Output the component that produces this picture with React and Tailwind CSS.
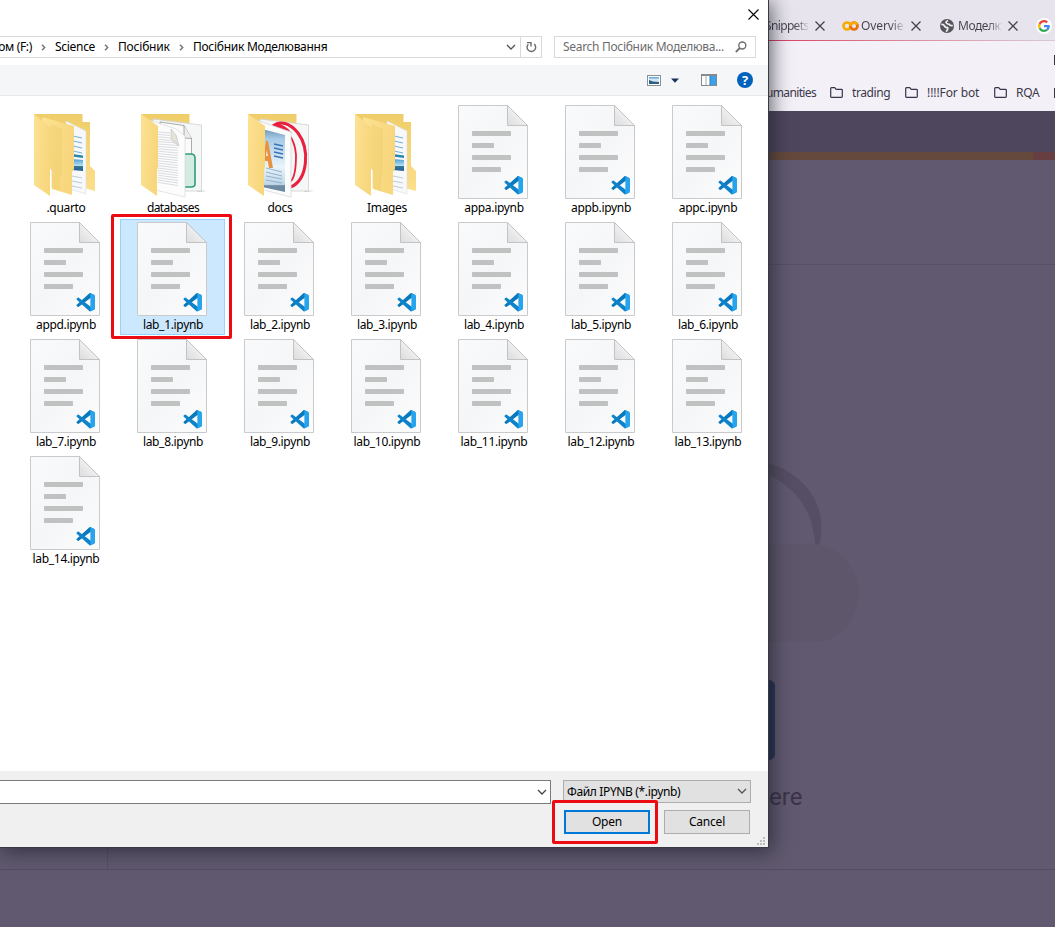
import React from "react";

const files = [
  [".quarto", "pages"], ["databases", "sheets"], ["docs", "docs"], ["Images", "pages"],
  ["appa.ipynb"], ["appb.ipynb"], ["appc.ipynb"], ["appd.ipynb"],
  ["lab_1.ipynb"], ["lab_2.ipynb"], ["lab_3.ipynb"], ["lab_4.ipynb"], ["lab_5.ipynb"], ["lab_6.ipynb"],
  ["lab_7.ipynb"], ["lab_8.ipynb"], ["lab_9.ipynb"], ["lab_10.ipynb"], ["lab_11.ipynb"], ["lab_12.ipynb"],
  ["lab_13.ipynb"], ["lab_14.ipynb"],
];

function Defs() {
  return (
    <svg width="0" height="0" className="absolute">
      <defs>
        <linearGradient id="paper" x1="0" y1="0" x2="1" y2="1">
          <stop offset="0" stopColor="#f9fafb" /><stop offset="0.5" stopColor="#f5f6f8" /><stop offset="1" stopColor="#fcfcfc" />
        </linearGradient>
        <linearGradient id="fold" x1="0" y1="1" x2="0.7" y2="0.3">
          <stop offset="0" stopColor="#dcdcdc" /><stop offset="1" stopColor="#f6f6f6" />
        </linearGradient>
        <linearGradient id="flap" x1="0" y1="0" x2="1" y2="0.3">
          <stop offset="0" stopColor="#fde293" /><stop offset="1" stopColor="#f7d67c" />
        </linearGradient>
        <linearGradient id="back" x1="0" y1="0" x2="0" y2="1">
          <stop offset="0" stopColor="#efcd69" /><stop offset="1" stopColor="#fbdf8c" />
        </linearGradient>
        <linearGradient id="sky" x1="0" y1="0" x2="0" y2="1">
          <stop offset="0" stopColor="#4a9fd8" /><stop offset="0.55" stopColor="#b8e0ef" /><stop offset="0.6" stopColor="#357b91" /><stop offset="1" stopColor="#245f9c" />
        </linearGradient>
        <linearGradient id="doc" x1="0" y1="0" x2="0" y2="1">
          <stop offset="0" stopColor="#6d97b5" /><stop offset="0.15" stopColor="#a5c9e5" /><stop offset="0.6" stopColor="#eaf4fb" /><stop offset="0.88" stopColor="#bfd7e8" /><stop offset="0.9" stopColor="#6f8ba3" />
        </linearGradient>
      </defs>
    </svg>
  );
}

function Notebook() {
  return (
    <svg width="70" height="94" viewBox="0 0 70 94">
      <path d="M.5.5H49.5L69.5 20.5V93.5H.5Z" fill="url(#paper)" stroke="#c9cacc" />
      <path d="M49.5.5V20.5H69.5Z" fill="url(#fold)" stroke="#c2c3c4" />
      <g fill="#c0c1c1">
        <rect x="14" y="26" width="39" height="5" rx=".7" /><rect x="14" y="38" width="22" height="5" rx=".7" />
        <rect x="14" y="50" width="39" height="5" rx=".7" /><rect x="14" y="62" width="29" height="5" rx=".7" />
      </g>
      <g transform="translate(46.5 71) scale(.185)">
        <path d="M96.5 10.8 75.9.9c-2.4-1.1-5.2-.7-7.1 1.2L1.3 63.6c-1.8 1.7-1.8 4.5 0 6.1l5.5 5c1.5 1.4 3.7 1.5 5.3.2L93.4 13.4c2.7-2.1 6.6-.1 6.6 3.3v-.3c0-2.4-1.4-4.6-3.5-5.6Z" fill="#0879bd" />
        <path d="m96.5 89.2-20.6 9.9c-2.4 1.1-5.2.7-7.1-1.2L1.3 36.4c-1.8-1.7-1.8-4.5 0-6.1l5.5-5c1.5-1.4 3.7-1.5 5.3-.2l81.3 61.5c2.7 2.1 6.6.1 6.6-3.3v.3c0 2.4-1.4 4.6-3.5 5.6Z" fill="#0d83cb" />
        <path d="M75.9 99.1c-2.4 1.2-5.2.7-7.1-1.2 2.3 2.3 6.2.7 6.2-2.6V4.7c0-3.3-3.9-4.9-6.2-2.6C70.7.2 73.5-.2 75.9.9l20.6 9.9c2.1 1 3.5 3.2 3.5 5.6v67.2c0 2.4-1.4 4.6-3.5 5.6Z" fill="#27a4ee" />
      </g>
    </svg>
  );
}

function Folder({ kind }) {
  return (
    <svg width="70" height="94" viewBox="0 0 70 94">
      {kind === "pages" ? (
        <>
          <path d="M4 9H52.5V17H60V61L65 66V86L54 83H40L12 50Z" fill="url(#back)" />
          <path d="M36 16 56 26V89L36 83Z" fill="#f7f8f9" stroke="#dcddde" strokeWidth=".6" />
          <g stroke="#77b2da" strokeWidth="1.1"><path d="M43 31 52 33M43 36 52 38M43 41 52 43M43 46 52 48" /></g>
          <path d="M42 49 53 50.500V53L42 51.500Z" fill="#2787ad" />
          <path d="M42 54 53 55V66L42 65Z" fill="url(#sky)" />
          <g stroke="#bdcdd8" strokeWidth="1"><path d="M42 71 52 73M42 76 52 78M42 81 52 83" /></g>
          <path d="M12 12 44 21V64L42 67V90L22 84V66L17 60Z" fill="url(#flap)" />
          <path d="M21 19 32 24V68L30 72V86L21 83Z" fill="#e8bf55" opacity=".24" />
        </>
      ) : (
        <>
          <path d="M4 9H52.500V30L20 55Z" fill="url(#back)" />
          <path d="M59 85 71 86 61 87Z" fill="#c9c9c9" />
          <path d="M16 14 64.500 20V86H42L16 76Z" fill="#f5f6f6" stroke="#cfd0d0" strokeWidth=".8" />
        </>
      )}
      {kind === "sheets" && (
        <>
          <path d="M23 17 47 20.500 54.500 33.500V76L30 84Z" fill="#fbfbfb" stroke="#777" strokeWidth=".6" />
          <path d="M47 20.500V33L54.500 33.500" fill="#ededed" stroke="#777" strokeWidth=".6" />
          <path d="M46 49H54Q58 49 58 53V79Q58 82 54 82H46Z" fill="#d3ebe0" stroke="#2e9f78" strokeWidth="1.600" />
          <path d="M12 15 39 24 48 31V92L18 85Z" fill="#fcfcfc" stroke="#d3d3d3" strokeWidth=".6" />
          <path d="M34 24 39 30 42 41 34 35Z" fill="#e5e2d9" stroke="#b5b5b5" strokeWidth=".5" />
          <g stroke="#d0d3d5" strokeWidth=".8">
            {Array.from({ length: 22 }, (_, i) => <path key={i} d={`M21 ${27 + i * 2.4} L${i < 4 ? 33 : 41} ${28 + i * 2.5}`} />)}
          </g>
        </>
      )}
      {kind === "docs" && (
        <>
          <g fill="none" stroke="#e9203e">
            <path d="M29 21C36 15 46 18 54 28 66 44 64 74 47 82" strokeWidth="3" />
            <path d="M31 20C42 22 51 34 52 50 52 63 50 73 47 76" strokeWidth="1.800" />
            <path d="M32 20.500C38 21 43 25 46 29" strokeWidth="4" />
          </g>
          <path d="M12 15 47 27V92L16 84Z" fill="#fbfcfc" stroke="#cfd4d7" strokeWidth=".7" />
          <path d="M18 24 41 30V87L18 82Z" fill="url(#doc)" />
          <path d="m18 60 4-24 2 0 5 27h-4l-1.200-7-3 0-.8 5Z" fill="#e8913f" />
          <path d="m22 51 .8-6 1.200 6Z" fill="#eee" />
          <g stroke="#3874ba" strokeWidth="1.300"><path d="M30 39 39 41M30 43 39 45M30 47 39 49M30 51 39 53" /></g>
          <g stroke="#87a9c6" strokeWidth=".9"><path d="M22 67 38 71M22 71 38 74M22 75 38 78M22 63 38 67" /></g>
        </>
      )}
      <path d={kind === "pages" ? "M4 9 21 23V60L20 63V91L4 80Z" : "M4 9 21 21V62L20 66V91L4 80Z"} fill="url(#flap)" />
    </svg>
  );
}

function Chevron({ dir = "down", className = "" }) {
  return dir === "down" ? (
    <svg width="10" height="7" viewBox="0 0 10 7" className={className}><path d="M1 1 5 5 9 1" fill="none" stroke="currentColor" strokeWidth="1.300" /></svg>
  ) : (
    <svg width="5" height="7" viewBox="0 0 5 7" className={className}><path d="M1 .8 3.700 3.500 1 6.200" fill="none" stroke="#777" strokeWidth="1.500" /></svg>
  );
}

function TabX() {
  return <svg width="10" height="10" viewBox="0 0 10 10" className="shrink-0"><path d="M.5.5 9.500 9.500M9.500.5.5 9.500" stroke="#45424d" strokeWidth="1.300" /></svg>;
}

function BookmarkFolder() {
  return <svg width="13" height="11" viewBox="0 0 13 11" className="shrink-0"><path d="M.7 1.500Q.7.700 1.500.700H4.700L6.200 2.300H11.500Q12.300 2.300 12.300 3V9.500Q12.300 10.300 11.500 10.300H1.500Q.7 10.300.7 9.500Z" fill="none" stroke="#39344a" strokeWidth="1.200" /></svg>;
}

function Browser() {
  return (
    <div className="flex h-[927px] w-[1055px] flex-col bg-[#60596f]">
      <div className="flex h-[41px] shrink-0 items-center bg-[#e7e4ed] pl-[765px] pt-[10px] text-[12px] whitespace-nowrap text-[#45424d]">
        <span className="w-[43px] bg-linear-to-r from-[#45424d] from-70% to-[#45424d22] bg-clip-text tracking-[-0.65px] text-transparent">Snippets</span>
        <span className="ml-[7px] flex"><TabX /></span>
        <svg width="17" height="10" viewBox="0 0 17 10" className="ml-[17px] shrink-0">
          <circle cx="5" cy="5" r="3.500" fill="none" stroke="#f9ab00" strokeWidth="2.700" />
          <circle cx="12" cy="5" r="3.500" fill="none" stroke="#e8710a" strokeWidth="2.700" />
          <path d="M8.500 5A3.500 3.500 0 0 1 15 3.500" fill="none" stroke="#f9ab00" strokeWidth="2.700" />
        </svg>
        <span className="ml-[2px] w-[43px] bg-linear-to-r from-[#45424d] from-70% to-[#45424d22] bg-clip-text tracking-[-0.1px] text-transparent">Overvie</span>
        <span className="ml-[7px] flex"><TabX /></span>
        <svg width="14" height="14" viewBox="0 0 14 14" className="ml-[19px] shrink-0">
          <circle cx="7" cy="7" r="7" fill="#55565a" />
          <path d="M1.200 5.500Q3.500 5 4.500 7T7.500 8.500Q8.500 10.500 6 12.700M8 1.500Q5 3 6.500 4.200T9 5.200Q10 7.200 12.800 6.500" fill="none" stroke="#eeecf2" strokeWidth="1.700" />
        </svg>
        <span className="ml-[4px] w-[43px] bg-linear-to-r from-[#45424d] from-70% to-[#45424d22] bg-clip-text tracking-[-0.45px] text-transparent">Моделю</span>
        <span className="ml-[7px] flex"><TabX /></span>
        <span className="ml-[18px] flex size-[16px] shrink-0 items-center justify-center rounded-full bg-white">
          <svg width="12" height="12" viewBox="0 0 24 24">
            <path fill="#4285f4" d="M23.500 12.300c0-.9-.1-1.500-.2-2.200H12v4.300h6.600c-.1 1.100-.8 2.700-2.400 3.800l3.700 2.900c2.300-2.100 3.600-5.100 3.600-8.800Z" />
            <path fill="#34a853" d="M12 24c3.200 0 6-1.100 7.900-2.900l-3.700-2.900c-1 .7-2.400 1.200-4.200 1.200-3.200 0-5.900-2.100-6.800-5l-3.900 3C3.300 21.300 7.300 24 12 24Z" />
            <path fill="#fbbc05" d="M5.200 14.400a7.400 7.400 0 0 1 0-4.800l-3.900-3a12 12 0 0 0 0 10.800Z" />
            <path fill="#ea4335" d="M12 4.700c2.300 0 3.800 1 4.700 1.800l3.400-3.300C18 1.200 15.200 0 12 0 7.300 0 3.300 2.700 1.300 6.600l3.900 3c.9-2.800 3.600-4.900 6.800-4.900Z" />
          </svg>
        </span>
      </div>
      <div className="-mt-px flex h-[71px] shrink-0 flex-col bg-[#f3f0f8]">
        <div className="h-px bg-linear-to-r from-[#d6335f] from-72% to-[#d5cbd8]" />
        <div className="flex h-[34px] justify-end pt-[14px]"><div className="h-[10px] w-px bg-[#39344a]" /></div>
        <div className="flex h-[35px] items-center pl-[766px] text-[12px] whitespace-nowrap text-[#3c3848]">
          <span className="w-[50px] tracking-[-0.65px]">umanities</span>
          <span className="ml-[14px] flex"><BookmarkFolder /></span>
          <span className="ml-[9px] w-[39px] tracking-[-0.4px]">trading</span>
          <span className="ml-[14px] flex"><BookmarkFolder /></span>
          <span className="ml-[9px] w-[53px] tracking-[-0.1px]">!!!!For bot</span>
          <span className="ml-[14px] flex"><BookmarkFolder /></span>
          <span className="ml-[9px] w-[25px] tracking-[-0.3px]">RQA</span>
          <span className="ml-[13px] h-[10px] w-px bg-[#39344a]" />
        </div>
      </div>
      <div className="h-[41px] shrink-0 bg-[#4e465c]" />
      <div className="flex h-[8px] shrink-0 bg-[#64493c]"><svg width="22" height="8" className="ml-auto"><path d="M1 0H22V8H0Z" fill="#673f43" /></svg></div>
      <div className="h-[105px] shrink-0 border-b border-[#574f65]" />
      <div className="flex h-[605px] shrink-0 flex-col border-b border-[#544c62]">
        <svg width="300" height="379" viewBox="0 0 300 379" className="ml-[755px] shrink-0">
          <path d="M0 196C40 200 66 230 66.500 261Q66.500 271 64.500 280L60 279C58 246 42 224 13 209L0 204Z" fill="#564e64" />
          <path d="M0 279H60C82 281 103 301 103 327C103 356 84 377 57 377H0Z" fill="#5e566b" />
        </svg>
        <div className="mt-[36px] ml-[700px] h-[80px] w-[75px] shrink-0 rounded-[6px] bg-[#293457]" />
        <div className="mt-[20px] ml-[769px] font-[Roboto] text-[24px] leading-[34px] text-[#3b334b]">ere</div>
        <div className="ml-[107px] grow border-l border-[#574f65]" />
      </div>
    </div>
  );
}

function Dialog() {
  return (
    <div className="absolute top-0 left-0 flex h-[847px] w-[768px] flex-col bg-white shadow-[0_0_0_1px_#393944,3px_3px_18px_1px_rgba(25,25,35,0.65)]">
      <div className="flex h-[36px] shrink-0 justify-end pt-[9px] pr-[9px]">
        <svg width="11" height="11" viewBox="0 0 11 11"><path d="M.5.5 10.500 10.500M10.500.5.5 10.500" stroke="#000" strokeWidth="1.100" /></svg>
      </div>
      <div className="flex h-[29px] shrink-0 text-[12px] whitespace-nowrap">
        <div className="flex h-[22px] w-[542px] items-center border border-l-0 border-[#d9d9d9]">
          <div className="flex w-[32px] justify-end tracking-[-0.35px]"><span>ом (F:)</span></div>
          <Chevron dir="right" className="ml-[9px]" />
          <span className="ml-[9px] w-[41px] tracking-[-0.3px]">Science</span>
          <Chevron dir="right" className="ml-[8px]" />
          <span className="ml-[9px] w-[53px] tracking-[-0.2px]">Посібник</span>
          <Chevron dir="right" className="ml-[8px]" />
          <span className="ml-[9px] tracking-[-0.28px]">Посібник Моделювання</span>
          <Chevron className="ml-auto mr-[4px] text-[#555]" />
          <div className="flex h-full w-[21px] items-center justify-center border-l border-[#d9d9d9]">
            <svg width="11" height="12" viewBox="0 0 11 12"><path d="M8.200 3A4.300 4.300 0 1 1 2.300 3.200" fill="none" stroke="#6b6b6b" strokeWidth="1.400" /><path d="M1 1.600H5V5.600" fill="none" stroke="#6b6b6b" strokeWidth="1.400" /></svg>
          </div>
        </div>
        <div className="ml-[12px] flex h-[22px] w-[202px] items-center border border-[#d9d9d9] pl-[8px] text-[#6d6d6d]">
          <span className="tracking-[-0.3px]">Search Посібник Моделюва...</span>
          <svg width="12" height="12" viewBox="0 0 12 12" className="mr-[8px] ml-auto"><circle cx="7.300" cy="4.500" r="3.500" fill="none" stroke="#707070" strokeWidth="1.400" /><path d="M4.800 7 .8 11" stroke="#707070" strokeWidth="1.800" /></svg>
        </div>
      </div>
      <div className="flex h-[31px] shrink-0 items-center border-b border-[#e6e8eb] bg-[#f4f6f8] pl-[647px]">
        <svg width="14" height="11" viewBox="0 0 14 11"><rect x=".5" y=".5" width="13" height="10" fill="#fff" stroke="#8c8f94" /><rect x="2" y="2" width="10" height="7" fill="#cfe6f5" /><path d="M2 2H12V3.500H2Z" fill="#6fa9d8" /><path d="M2 5 6 6.500 12 7V9H2Z" fill="#2c5f80" /></svg>
        <svg width="8" height="5" viewBox="0 0 8 5" className="ml-[10px]"><path d="M0 .5H8L4 4.700Z" fill="#19315a" /></svg>
        <svg width="16" height="12" viewBox="0 0 16 12" className="ml-[22px]"><rect x=".5" y=".5" width="15" height="11" fill="#fff" stroke="#85898f" /><path d="M0 1H16" stroke="#85898f" strokeWidth="2" /><path d="M5 1V11" stroke="#a3a6aa" /><rect x="9" y="2" width="6" height="9" fill="#3ca1e8" /><path d="M9 2V11" stroke="#277bbd" /></svg>
        <div className="ml-[20px] flex size-[16px] items-center justify-center rounded-full bg-[#0062bd] font-['Open_Sans'] text-[13px] leading-none font-bold text-white">?</div>
      </div>
      <div className="grid h-[675px] shrink-0 grid-cols-[repeat(7,107px)] content-start pt-[6px] pl-[13px]">
        {files.map(([name, kind], i) => (
          <div key={name} className="h-[117px] w-[107px]">
            <div className={i === 8 ? "flex h-[116px] w-[105px] flex-col items-center border border-[#99d1ff] bg-[#cce8ff] pt-[2px] pr-px" : "flex h-[116px] w-[105px] flex-col items-center pt-[3px] pr-px"}>
              {kind ? <Folder kind={kind} /> : <Notebook />}
              <span className={kind === "sheets" ? "mt-px ml-[2px] text-[12px] leading-[16px] tracking-[-0.6px] whitespace-nowrap" : "mt-px ml-[2px] text-[12px] leading-[16px] tracking-[-0.32px] whitespace-nowrap"}>{name}</span>
            </div>
          </div>
        ))}
      </div>
      <div className="flex h-[76px] shrink-0 flex-col bg-[#f0f0f0] pt-[9px] text-[12px]">
        <div className="flex h-[24px]">
          <div className="flex w-[551px] items-center justify-end border border-l-0 border-[#7a7a7a] bg-white pr-[3px] text-[#444]"><Chevron /></div>
          <div className="ml-[12px] flex h-[23px] w-[188px] items-center justify-between border border-[#adadad] bg-[#e1e1e1] pr-[3px] pl-[3px]"><span className="tracking-[-0.36px]">Файл IPYNB (*.ipynb)</span><Chevron className="text-[#555]" /></div>
        </div>
        <div className="mt-[6px] flex h-[24px] pl-[564px]">
          <button className="w-[86px] border-2 border-[#0078d7] bg-[#e1e1e1] leading-none tracking-[-0.2px]">Open</button>
          <button className="ml-[14px] w-[86px] border border-[#adadad] bg-[#e1e1e1] leading-none tracking-[-0.2px]">Cancel</button>
        </div>
        <svg width="8" height="8" className="mt-[3px] mr-[3px] ml-auto" fill="#bdbdbd"><path d="M6 0h2v2H6zM3 3h2v2H3zM6 3h2v2H6zM0 6h2v2H0zM3 6h2v2H3zM6 6h2v2H6z" /></svg>
      </div>
    </div>
  );
}

export default function App() {
  return (
    <div className="relative h-[927px] w-[1055px] overflow-hidden font-['Noto_Sans','Open_Sans',sans-serif] text-black">
      <Defs />
      <Browser />
      <Dialog />
      <div className="absolute top-[214px] left-[111px] h-[125px] w-[121px] rounded-[2px] border-3 border-[#ed0b13]" />
      <div className="absolute top-[800px] left-[552px] h-[44px] w-[106px] rounded-[2px] border-3 border-[#ed0b13]" />
    </div>
  );
}
